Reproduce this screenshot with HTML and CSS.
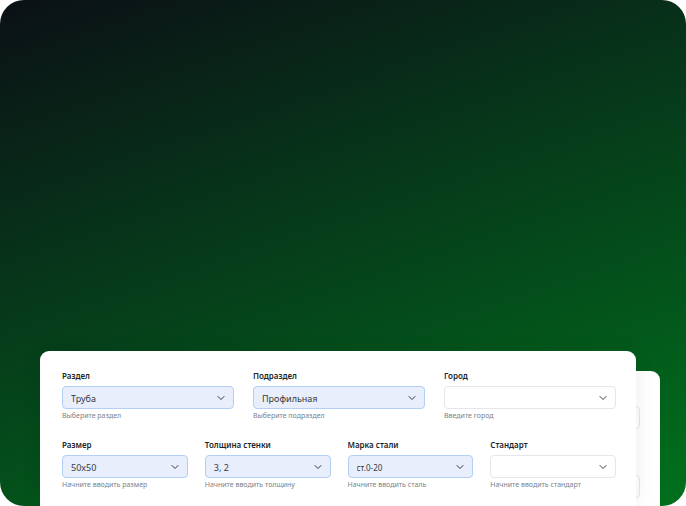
FILE: index.html
```html
<!DOCTYPE html>
<html lang="ru">
<head>
<meta charset="utf-8">
<meta name="viewport" content="width=device-width, initial-scale=1">
<title>Подбор металлопроката</title>
<link rel="stylesheet" href="styles.css">
</head>
<body>
<main class="stage">
  <div class="panel panel-back" aria-hidden="true">
    <div class="row row-three"><div class="ghost"></div></div>
    <div class="row row-four"><div class="ghost"></div></div>
  </div>
  <form class="panel panel-front">
    <div class="row row-three">
      <div class="field">
        <label for="section">Раздел</label>
        <div class="control filled">
          <select id="section"><option>Труба</option></select>
          <svg class="chevron" viewBox="0 0 8 8"><path d="M1 2.5 4 5.5 7 2.5"/></svg>
        </div>
        <p class="hint">Выберите раздел</p>
      </div>
      <div class="field">
        <label for="subsection">Подраздел</label>
        <div class="control filled">
          <select id="subsection"><option>Профильная</option></select>
          <svg class="chevron" viewBox="0 0 8 8"><path d="M1 2.5 4 5.5 7 2.5"/></svg>
        </div>
        <p class="hint">Выберите подраздел</p>
      </div>
      <div class="field">
        <label for="city">Город</label>
        <div class="control">
          <select id="city"><option></option></select>
          <svg class="chevron" viewBox="0 0 8 8"><path d="M1 2.5 4 5.5 7 2.5"/></svg>
        </div>
        <p class="hint">Введите город</p>
      </div>
    </div>
    <div class="row row-four">
      <div class="field">
        <label for="size">Размер</label>
        <div class="control filled">
          <select id="size"><option>50x50</option></select>
          <svg class="chevron" viewBox="0 0 8 8"><path d="M1 2.5 4 5.5 7 2.5"/></svg>
        </div>
        <p class="hint">Начните вводить размер</p>
      </div>
      <div class="field">
        <label for="wall">Толщина стенки</label>
        <div class="control filled">
          <select id="wall"><option>3, 2</option></select>
          <svg class="chevron" viewBox="0 0 8 8"><path d="M1 2.5 4 5.5 7 2.5"/></svg>
        </div>
        <p class="hint">Начните вводить толщину</p>
      </div>
      <div class="field">
        <label for="steel">Марка стали</label>
        <div class="control filled">
          <select id="steel" class="compact"><option>ст.0-20</option></select>
          <svg class="chevron" viewBox="0 0 8 8"><path d="M1 2.5 4 5.5 7 2.5"/></svg>
        </div>
        <p class="hint">Начните вводить сталь</p>
      </div>
      <div class="field">
        <label for="standard">Стандарт</label>
        <div class="control">
          <select id="standard"><option></option></select>
          <svg class="chevron" viewBox="0 0 8 8"><path d="M1 2.5 4 5.5 7 2.5"/></svg>
        </div>
        <p class="hint">Начните вводить стандарт</p>
      </div>
    </div>
  </form>
</main>
</body>
</html>
```

FILE: styles.css
```css
* {
  box-sizing: border-box;
}

body {
  margin: 0;
  background: #fff;
  font-family: "Noto Sans", "Open Sans", sans-serif;
  color: #212529;
}

.stage {
  display: grid;
  grid-template-columns: 1fr;
  align-items: end;
  min-height: 100vh;
  padding: 0 26px 0 40px;
  border-radius: 24px;
  overflow: hidden;
  background: linear-gradient(161deg, #0b1015 0%, #07331a 36%, #00711c 100%);
}

.panel {
  grid-area: 1 / 1;
  display: grid;
  gap: 18px;
  padding: 19px 20px 16px 22px;
  background: #fff;
}

.panel-front {
  margin-right: 24px;
  border-radius: 9px 9px 0 0;
  box-shadow: 0 0 20px rgba(0, 0, 0, 0.08);
}

.panel-back {
  margin-left: 24px;
  padding-top: 35px;
  padding-bottom: 8px;
  gap: 46px;
  border-radius: 9px 9px 0 0;
}

.row {
  display: grid;
}

.row-three {
  grid-template-columns: repeat(3, 1fr);
  gap: 19px;
}

.row-four {
  grid-template-columns: repeat(4, 1fr);
  gap: 17px;
}

.ghost {
  grid-column: -2;
  height: 23px;
  border: 1px solid #e6e8ea;
  border-radius: 4px;
}

.field {
  display: grid;
  min-width: 0;
}

label {
  margin-bottom: 5px;
  font-size: 8px;
  line-height: 11px;
  font-weight: 600;
}

.control {
  display: grid;
  align-items: center;
}

select {
  grid-area: 1 / 1;
  appearance: none;
  width: 100%;
  height: 23px;
  margin: 0;
  padding: 1px 24px 0 8px;
  border: 1px solid #e4e6e9;
  border-radius: 4px;
  background: #fff;
  font-family: inherit;
  font-size: 9px;
  color: #343a40;
}

.filled select {
  border-color: #b4cef8;
  background: #e8eefb;
}

.filled .compact {
  font-size: 8px;
}

.chevron {
  grid-area: 1 / 1;
  justify-self: end;
  width: 8px;
  height: 8px;
  margin-right: 9px;
  fill: none;
  stroke: #343a40;
  stroke-width: 1;
  stroke-linecap: round;
  stroke-linejoin: round;
  pointer-events: none;
}

.hint {
  margin: 2px 0 0;
  font-size: 7px;
  line-height: 10px;
  color: #7b828a;
}
```
